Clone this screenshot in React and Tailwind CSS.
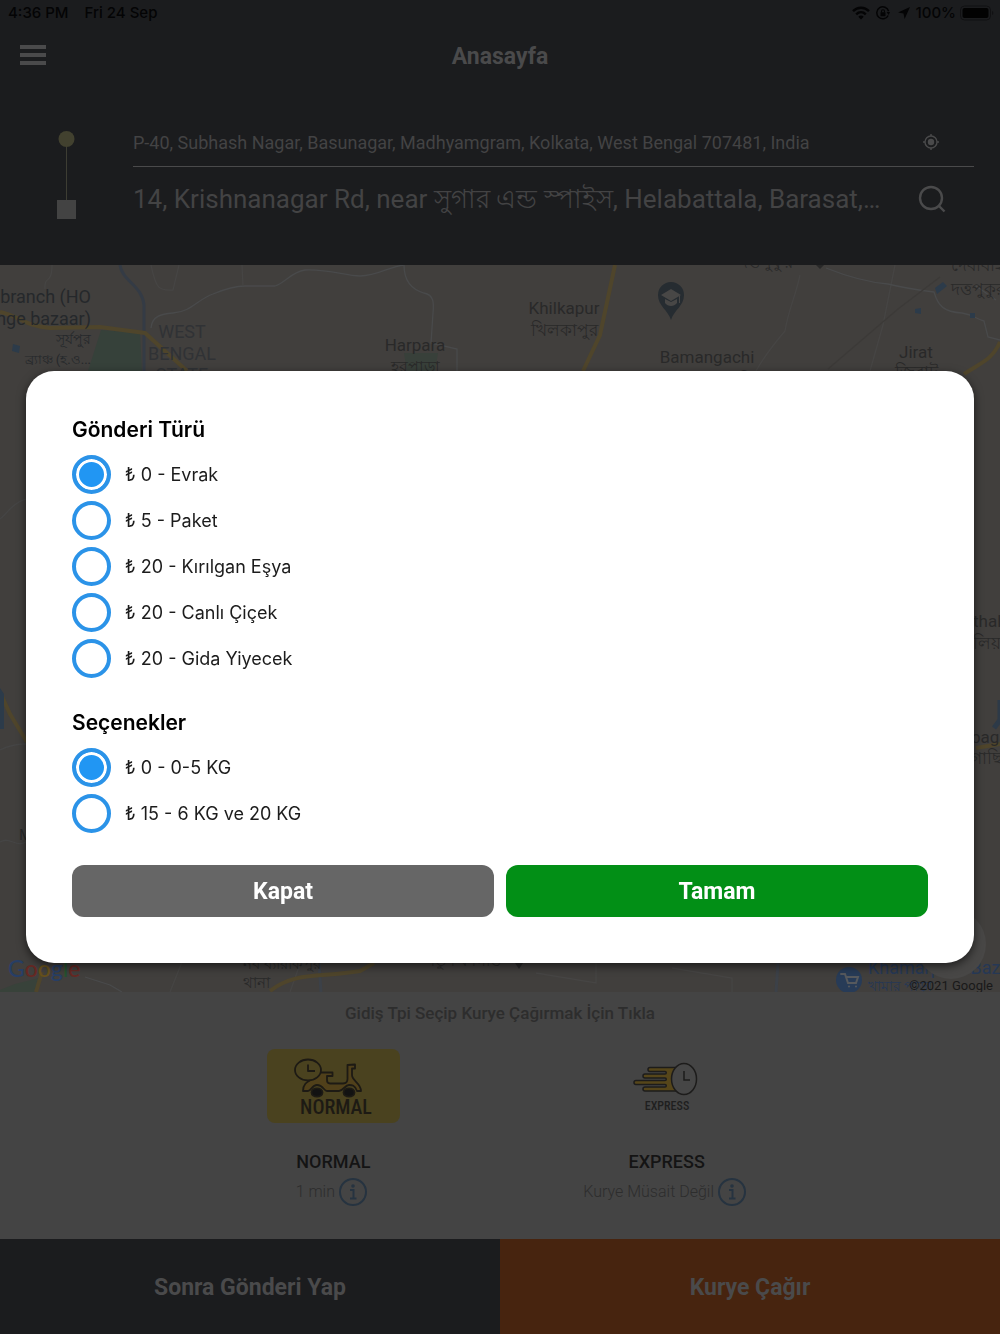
import { useState } from "react";

const SHIPMENT_TYPES = [
  "₺ 0 - Evrak",
  "₺ 5 - Paket",
  "₺ 20 - Kırılgan Eşya",
  "₺ 20 - Canlı Çiçek",
  "₺ 20 - Gida Yiyecek",
];

const WEIGHT_OPTIONS = ["₺ 0 - 0-5 KG", "₺ 15 - 6 KG ve 20 KG"];

function StatusBar() {
  return (
    <div className="flex h-[26px] items-center justify-between pl-2 pr-[6px] font-['Inter',sans-serif] text-[15px] font-medium text-[#040405]">
      <div className="flex gap-4">
        <span>4:36 PM</span>
        <span>Fri 24 Sep</span>
      </div>
      <div className="flex items-center">
        <svg className="mr-[6px] h-[14px] w-[18px]" viewBox="0 0 18 14" fill="none" stroke="currentColor" strokeWidth="2.4">
          <path d="M1 5.2C5.5 0.6 12.5 0.6 17 5.2" />
          <path d="M4.2 8.3C7 5.6 11 5.6 13.8 8.3" />
          <path d="M9 13.6l-2.7-2.9c1.5-1.5 3.9-1.5 5.4 0z" fill="currentColor" stroke="none" />
        </svg>
        <svg className="mr-2 h-[14px] w-[14px]" viewBox="0 0 14 14" fill="none" stroke="currentColor" strokeWidth="1.5">
          <path d="M12.2 9.5A6 6 0 1 1 12.6 5.2" />
          <path d="M10.6 6h3.4l-1.4 3z" fill="currentColor" stroke="none" />
          <rect x="4.5" y="6.2" width="5" height="4" rx="0.6" fill="currentColor" stroke="none" />
          <path d="M5.5 6.5V5.2a1.5 1.5 0 0 1 3 0v1.3" strokeWidth="1.1" />
        </svg>
        <svg className="mr-[6px] h-[12px] w-[12px]" viewBox="0 0 12 12" fill="currentColor">
          <path d="M12 0L0 5.6l5.5 0.9L6.6 12z" />
        </svg>
        <span>100%</span>
        <svg className="ml-1 h-[16px] w-[34px]" viewBox="0 0 34 16">
          <rect x="0.5" y="1" width="30" height="14" rx="4" fill="none" stroke="#111113" />
          <rect x="2.5" y="3" width="26" height="10" rx="2" fill="#020202" />
          <path d="M32 6v4c1.8-0.6 1.8-3.4 0-4z" fill="#111113" />
        </svg>
      </div>
    </div>
  );
}

function Header() {
  return (
    <header className="h-[265px] bg-[#1b1c1e] font-['Roboto','Noto_Sans',sans-serif] text-[#4a4a4b]">
      <StatusBar />
      <div className="grid h-[58px] grid-cols-[1fr_auto_1fr] items-center px-5">
        <button type="button" aria-label="Menü" className="flex w-[26px] flex-col gap-1">
          <span className="h-1 w-full bg-[#4a4a4b]" />
          <span className="h-1 w-full bg-[#4a4a4b]" />
          <span className="h-1 w-full bg-[#4a4a4b]" />
        </button>
        <h1 className="pt-1 text-[23px] font-bold">Anasayfa</h1>
      </div>
      <div className="flex pr-[26px] pt-[34px]">
        <svg className="mt-3 h-[90px] w-[133px] shrink-0" viewBox="0 0 133 90">
          <rect x="66" y="12" width="1" height="60" fill="#3d3d33" />
          <circle cx="66.500" cy="9" r="8" fill="#42412f" />
          <rect x="57" y="70" width="19" height="19" fill="#434343" />
        </svg>
        <div className="min-w-0 flex-1">
          <div className="flex h-[49px] items-center border-b border-[#4a4a4b]">
            <span className="min-w-0 flex-1 truncate text-[18px] text-[#434344]">
              P-40, Subhash Nagar, Basunagar, Madhyamgram, Kolkata, West Bengal 707481, India
            </span>
            <button type="button" aria-label="Konumum" className="mr-[34px] shrink-0">
              <svg className="h-[18px] w-[18px]" viewBox="0 0 18 18" fill="none" stroke="currentColor" strokeWidth="1.4">
                <circle cx="9" cy="9" r="6" />
                <circle cx="9" cy="9" r="3.200" fill="currentColor" stroke="none" />
                <path d="M9 1v2M9 15v2M1 9h2M15 9h2" />
              </svg>
            </button>
          </div>
          <div className="flex h-[64px] items-center">
            <span className="w-[750px] max-w-full shrink truncate text-[26px] text-[#434344]">
              14, Krishnanagar Rd, near সুগার এন্ড স্পাইস, Helabattala, Barasat, Kolkata
            </span>
            <button type="button" aria-label="Ara" className="ml-auto mr-7 shrink-0">
              <svg className="h-7 w-7" viewBox="0 0 28 28" fill="none" stroke="currentColor" strokeWidth="2.400">
                <circle cx="13" cy="13" r="11" />
                <path d="M20.500 20.500l6 6" />
              </svg>
            </button>
          </div>
        </div>
      </div>
    </header>
  );
}

function CityMap() {
  return (
    <div className="relative flex-1 overflow-hidden bg-[#413f3d]">
      <svg
        className="absolute inset-0 h-full w-full"
        viewBox="0 265 1000 727"
        preserveAspectRatio="xMidYMid slice"
        fontFamily="Roboto, 'Noto Sans', sans-serif"
        fontSize="18"
        fill="#25282b"
        role="img"
        aria-label="Harita"
      >
        <path d="M101 330L140 333L142 371H88z" fill="#36413a" />
        <path d="M404 353h34l-3 18h-28z" fill="#38403a" />
        <path d="M0 990l15-6 24-6-4 14H0z" fill="#38423a" />
        <g fill="none" stroke="#494a4b" strokeWidth="1.300">
          <path d="M151 328c1-12 10-14 22-15 18-1 25-14 40-19 12-5 22-8 32-8h30c10-3 16-14 30-16 25-1 40 6 55 6 18 0 30-10 44-11" />
          <path d="M404 265c0 14 6 24 20 28 10 2 10 10 9 20l-2 30 26 6v22" />
          <path d="M52 265c0 20-8 10-7 24M151 265c5 24 8 26 22 25l6-25M242 265l1 21" stroke="#464544" />
          <path d="M800 275c-4 20-12 36-15 56-12 14-20 24-29 40M895 265l-12 60-13 46" stroke="#464544" />
          <path d="M996 300l-20-14M826 268c20 8 38 14 62 16 16 4 30 6 46 8 4 14 10 20 28 21 12 2 14 6 22 8l4 16 12 3" />
          <path d="M0 519c8-6 12-16 26-20M0 750c8-4 18-6 26-6M0 842c10-6 16 6 26 0" stroke="#454545" />
          <path d="M85 977l25 8 12 7" />
          <path d="M170 992l12-30M290 992l10-28M596 963v20l-60-10M732 992v-14l-60-10" stroke="#464544" />
        </g>
        <path d="M940 277l-42 32-70 60" fill="none" stroke="#3c3a38" strokeWidth="1.500" />
        <g fill="none" stroke="#343b45" strokeWidth="3">
          <path d="M120 265c2 16 22 20 24 40v66" />
          <path d="M319 963l2 29M778 963l-2 29" stroke="#3c4148" />
          <path d="M1000 700v20l-6 8" stroke="#2d3a48" strokeWidth="5" />
        </g>
        <g fill="none" stroke="#4f452b" strokeWidth="4">
          <path d="M0 312c18 4 26 14 50 16l50-1 45 6 42 38" />
          <path d="M615 265l-15 70-17 36" />
          <path d="M1000 342c-8 18-18 20-36 32M0 692l10 22 17 28M976 748l24-4" />
          <path d="M36 992l6-20M270 991c26-20 50-13 90-20l14-8" />
        </g>
        <g fill="#2c3b4a">
          <path d="M13 344l7 2-1 7-7-2zM935 288l8-6 4 4-10 8zM915 309l6-1v6l-6-1zM970 313h5v5h-5z" />
          <path d="M0 688l4 6v35H0z" />
        </g>
        <text x="91" y="303" textAnchor="end">branch (HO</text>
        <text x="91" y="325" textAnchor="end">nge bazaar)</text>
        <text x="91" y="344" textAnchor="end" fontSize="14">সূর্যপুর</text>
        <text x="91" y="364" textAnchor="end" fontSize="13">ব্র্যাঞ্চ (হ.ও...</text>
        <g textAnchor="middle" fill="#303235">
          <text x="182" y="338">WEST</text>
          <text x="182" y="360">BENGAL</text>
          <text x="182" y="381">STATE</text>
        </g>
        <g textAnchor="middle" fill="#292929" fontSize="17">
          <text x="415" y="351">Harpara</text>
          <text x="415" y="372" fontSize="16">হরপাড়া</text>
          <text x="564" y="314">Khilkapur</text>
          <text x="564" y="336">খিলকাপুর</text>
          <text x="707" y="363">Bamangachi</text>
          <text x="722" y="386">বামনগাছি</text>
          <text x="916" y="358">Jirat</text>
          <text x="916" y="378">জিরাট</text>
          <text x="766" y="268">দত্তপুকুর</text>
          <path d="M816 265h8l-4 4z" />
        </g>
        <g fill="#292929" fontSize="17">
          <text x="951" y="271">দেবীবাই</text>
          <text x="951" y="295">দত্তপুকুর</text>
          <text x="973" y="627">thali</text>
          <text x="973" y="649">লিয়া</text>
          <text x="971" y="743">baga</text>
          <text x="971" y="764">গাছি</text>
          <text x="19" y="840" fontSize="15">M</text>
          <text x="243" y="969" fontSize="15">নব ব্যারাকপুর</text>
          <text x="243" y="988" fontSize="15">থানা</text>
          <text x="426" y="966" fontSize="15">নতুন বনগাঁও</text>
          <path d="M515 963h8l-4 6z" />
        </g>
        <path d="M671 320c-3-10-13-14-13-25a13 13 0 0 1 26 0c0 11-10 15-13 25z" fill="#262c31" />
        <path d="M661 295l10-6 10 6-10 6zM665 299v4c3 4 9 4 12 0v-4l-6 3zM679 296h1v7h-1z" fill="#484746" />
        <circle cx="849" cy="980" r="13" fill="#273b57" />
        <path d="M841 974h4l3 9h8l2-6h-12M849 986.500v.1M856 986.500v.1" fill="none" stroke="#56595d" strokeWidth="2" strokeLinecap="round" />
        <g fill="#263855">
          <text x="868" y="974">Khamarpara Bazar</text>
          <text x="868" y="991" fontSize="14">খামার পাড়া</text>
        </g>
        <circle cx="951" cy="944" r="35" fill="#484746" />
        <text x="8" y="977" fontSize="23" fontFamily="Lato, sans-serif" fontWeight="500">
          <tspan fill="#273e65">G</tspan>
          <tspan fill="#662823">o</tspan>
          <tspan fill="#66501b">o</tspan>
          <tspan fill="#273e65">g</tspan>
          <tspan fill="#25512f">l</tspan>
          <tspan fill="#662823">e</tspan>
        </text>
        <text x="993" y="990" textAnchor="end" fontSize="13" fill="#191919">©2021 Google</text>
      </svg>
    </div>
  );
}

function NormalArt() {
  return (
    <svg className="h-[74px] w-[133px] rounded-lg bg-[#4a421f]" viewBox="0 0 133 74" fill="none" stroke="#1d1a14" strokeWidth="1.800" strokeLinejoin="round">
      <path
        d="M50 23.500H65.500V27H60V31C60 33.500 61 34.500 63 34.500H76C79 34.500 80.500 33 80.500 30V16L88 15.500V19.500H85V26C85 32 94 34 94 42H90C88 36 85 36 82 36C78 36 76 42 72 42H60C57 42 56 36 50 36C45 36 44 42 41 42H36C36 35 40 33 45 30z"
        fill="#50401a"
      />
      <ellipse cx="41" cy="21" rx="13" ry="10.500" fill="#4a421f" />
      <path d="M41 15.500V22h7" />
      <ellipse cx="50" cy="43.500" rx="5.500" ry="4.200" fill="#121212" />
      <ellipse cx="82" cy="43.500" rx="5.500" ry="4.200" fill="#121212" />
      <text x="69" y="65" textAnchor="middle" fill="#1d1a14" stroke="none" fontFamily="'Roboto Condensed', 'Liberation Sans Narrow', Roboto, sans-serif" fontWeight="500" fontSize="20">
        NORMAL
      </text>
    </svg>
  );
}

function ExpressArt() {
  return (
    <svg className="h-[74px] w-[133px]" viewBox="0 0 133 74" fill="none" stroke="#1d1c1b" strokeWidth="1.500">
      <path
        d="M78 18.500H50a2 2 0 0 0 0 4H65a1.200 1.200 0 0 1 0 2.500H45a2 2 0 0 0 0 4H65a1.200 1.200 0 0 1 0 2.500H36a2 2 0 0 0 0 4H65a1.200 1.200 0 0 1 0 2.500H45a2 2 0 0 0 0 4H78z"
        fill="#56461a"
      />
      <ellipse cx="84" cy="30" rx="12.500" ry="15.500" fill="#464646" />
      <path d="M84 22v9h6" />
      <text x="67" y="61" textAnchor="middle" fill="#1f1f1f" stroke="none" fontFamily="'Roboto Condensed', 'Liberation Sans Narrow', Roboto, sans-serif" fontWeight="500" fontSize="12">
        EXPRESS
      </text>
    </svg>
  );
}

function InfoIcon() {
  return (
    <svg className="h-7 w-7" viewBox="0 0 28 28" fill="none" stroke="#263340" strokeWidth="2">
      <circle cx="14" cy="14" r="13" />
      <circle cx="14" cy="8" r="1.800" fill="#263340" stroke="none" />
      <path d="M11 12h3.500v8M11 20.500h6.500" />
    </svg>
  );
}

function DeliveryMode({ art, name, detail }) {
  return (
    <div className="flex w-1/3 flex-col items-center">
      <button type="button" aria-label={name}>{art}</button>
      <h2 className="mt-[29px] text-[18px] font-medium leading-5 text-[#141414]">{name}</h2>
      <div className="mt-[6px] flex items-center gap-1 pr-1">
        <span className="text-[16px] font-light text-[#2d2d2d]">{detail}</span>
        <button type="button" aria-label={`${name} bilgi`}><InfoIcon /></button>
      </div>
    </div>
  );
}

function RadioGroup({ title, name, options }) {
  const [selected, setSelected] = useState(0);
  return (
    <fieldset>
      <legend className="mb-[10px] text-[21px] font-semibold leading-[22px] text-black">{title}</legend>
      {options.map((label, index) => (
        <label key={label} className="flex h-[46px] items-center gap-[14px] text-[18px] text-[#1c1c1c]">
          <input
            type="radio"
            name={name}
            checked={selected === index}
            onChange={() => setSelected(index)}
            className="size-[39px] shrink-0 appearance-none rounded-full border-4 border-[#2b93e8] bg-white checked:bg-[#2196f3] checked:shadow-[inset_0_0_0_3px_white]"
          />
          {label}
        </label>
      ))}
    </fieldset>
  );
}

export default function App() {
  return (
    <div className="flex min-h-screen flex-col bg-[#444444] font-['Roboto','Noto_Sans',sans-serif]">
      <Header />
      <CityMap />
      <section className="h-[247px] bg-[#444444] pt-[10px]">
        <p className="text-center text-[17px] font-medium leading-[22px] text-[#2d2d2d]">
          Gidiş Tpi Seçip Kurye Çağırmak İçin Tıkla
        </p>
        <div className="mt-[25px] flex justify-center">
          <DeliveryMode art={<NormalArt />} name="NORMAL" detail="1 min" />
          <DeliveryMode art={<ExpressArt />} name="EXPRESS" detail="Kurye Müsait Değil" />
        </div>
      </section>
      <footer className="grid h-[95px] grid-cols-2 text-[23px] font-bold">
        <button type="button" className="bg-[#1b1c1e] pt-1 text-[#4a4a4b]">Sonra Gönderi Yap</button>
        <button type="button" className="bg-[#47240f] pt-1 text-[#4a4a4b]">Kurye Çağır</button>
      </footer>

      <div className="fixed inset-0 flex items-center justify-center px-[26px]">
        <form
          role="dialog"
          aria-modal="true"
          aria-label="Gönderi Türü"
          onSubmit={(event) => event.preventDefault()}
          className="w-full rounded-[28px] bg-white px-[46px] pb-[46px] pt-12 font-['Inter',sans-serif] shadow-[0_3px_10px_rgba(0,0,0,0.6)]"
        >
          <RadioGroup title="Gönderi Türü" name="shipment" options={SHIPMENT_TYPES} />
          <div className="mt-[31px]">
            <RadioGroup title="Seçenekler" name="weight" options={WEIGHT_OPTIONS} />
          </div>
          <div className="mt-[29px] grid grid-cols-2 gap-3 font-['Roboto',sans-serif] text-[23px] font-bold text-white">
            <button type="button" className="h-[52px] rounded-xl bg-[#666666] pt-[2px]">Kapat</button>
            <button type="submit" className="h-[52px] rounded-xl bg-[#028f16] pt-[2px]">Tamam</button>
          </div>
        </form>
      </div>
    </div>
  );
}
